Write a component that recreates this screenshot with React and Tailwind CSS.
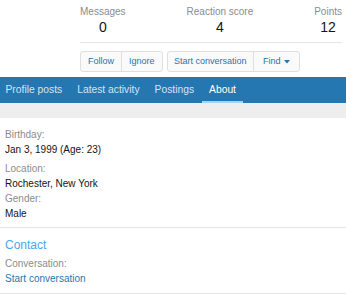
export default function App() {
  const font = { fontFamily: '"Liberation Sans", Arial, sans-serif' };
  return (
    <div className="w-[346px] h-[300px] bg-white overflow-hidden" style={font}>
      <div className="pl-[80px] pr-[4px] pt-[5px]">
        <div className="flex justify-between">
          <div className="text-center">
            <div className="text-[10px] leading-[14px] text-[#8c8c8c]">Messages</div>
            <div className="text-[14px] leading-[16px] text-[#141414]">0</div>
          </div>
          <div className="text-center">
            <div className="text-[10px] leading-[14px] text-[#8c8c8c]">Reaction score</div>
            <div className="text-[14px] leading-[16px] text-[#141414]">4</div>
          </div>
          <div className="text-center">
            <div className="text-[10px] leading-[14px] text-[#8c8c8c]">Points</div>
            <div className="text-[14px] leading-[16px] text-[#141414]">12</div>
          </div>
        </div>
        <div className="mt-[7px] h-px bg-[#e5e5e5]" />
        <div className="mt-[8px] flex gap-[4px]">
          <div className="flex border border-[#dfdfdf] rounded-[3px] bg-[#fafafa] h-[21px] text-[9px] text-[#2577b1]">
            <span className="px-[7px] flex items-center border-r border-[#dfdfdf]">Follow</span>
            <span className="px-[7px] flex items-center">Ignore</span>
          </div>
          <div className="flex border border-[#dfdfdf] rounded-[3px] bg-[#fafafa] h-[21px] text-[9px] text-[#2577b1]">
            <span className="px-[6.5px] flex items-center border-r border-[#dfdfdf]">Start conversation</span>
            <span className="pl-[9px] pr-[9px] flex items-center gap-[3px]">
              Find
              <svg width="6" height="4" viewBox="0 0 6 4"><path d="M0 0h6L3 3.5z" fill="#2577b1" /></svg>
            </span>
          </div>
        </div>
      </div>
      <div className="mt-[5px] h-[26px] bg-[#2577b1] flex items-stretch ml-[-2px] text-[10.3px]">
        <div className="px-[7.5px] flex items-center text-[#d3e4f3]">Profile posts</div>
        <div className="px-[7.5px] flex items-center text-[#d3e4f3]">Latest activity</div>
        <div className="px-[7.5px] flex items-center text-[#d3e4f3]">Postings</div>
        <div className="px-[7.5px] flex items-center text-white relative">
          About
          <div className="absolute left-0 right-0 bottom-0 h-[2px] bg-[#a9d1f0]" />
        </div>
      </div>
      <div className="h-[15px] bg-[#eeeeee]" />
      <div className="px-[5px] pt-[9px] pb-[6px] text-[10px] leading-[15px]">
        <div className="text-[#8c8c8c]">Birthday:</div>
        <div className="text-[#141414]">Jan 3, 1999 (Age: 23)</div>
        <div className="mt-[4px] text-[#8c8c8c]">Location:</div>
        <div className="text-[#141414]">Rochester, New York</div>
        <div className="text-[#8c8c8c]">Gender:</div>
        <div className="text-[#141414]">Male</div>
      </div>
      <div className="h-px bg-[#e5e5e5]" />
      <div className="px-[5px] pt-[9px] pb-[7px] text-[10px] leading-[15px] border-b border-[#e5e5e5]">
        <div className="text-[12px] leading-[16px] text-[#47a7eb]">Contact</div>
        <div className="mt-[3px] text-[#8c8c8c]">Conversation:</div>
        <div className="text-[#2577b1]">Start conversation</div>
      </div>
    </div>
  );
}
